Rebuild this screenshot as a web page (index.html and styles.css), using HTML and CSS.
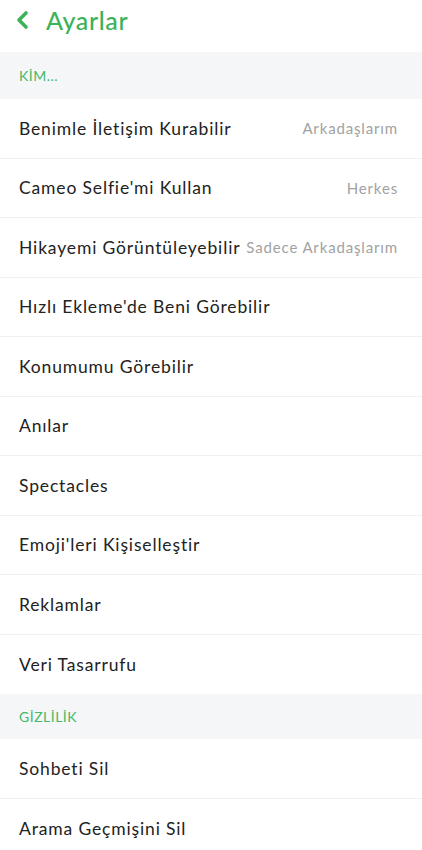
FILE: index.html
```html
<!DOCTYPE html>
<html lang="tr">
<head>
<meta charset="utf-8">
<link rel="stylesheet" href="styles.css">
</head>
<body>
<header class="topbar">
  <svg class="back" width="14" height="20" viewBox="0 0 14 20"><path d="M11 3 L4 10 L11 17" fill="none" stroke="#3cb25a" stroke-width="3.6" stroke-linecap="round" stroke-linejoin="round"/></svg>
  <h1 class="title">Ayarlar</h1>
</header>
<div class="section">KİM...</div>
<ul class="list">
  <li class="row"><span class="label">Benimle İletişim Kurabilir</span><span class="value">Arkadaşlarım</span></li>
  <li class="row"><span class="label">Cameo Selfie'mi Kullan</span><span class="value">Herkes</span></li>
  <li class="row"><span class="label">Hikayemi Görüntüleyebilir</span><span class="value">Sadece Arkadaşlarım</span></li>
  <li class="row"><span class="label">Hızlı Ekleme'de Beni Görebilir</span></li>
  <li class="row"><span class="label">Konumumu Görebilir</span></li>
  <li class="row"><span class="label">Anılar</span></li>
  <li class="row"><span class="label">Spectacles</span></li>
  <li class="row"><span class="label">Emoji'leri Kişiselleştir</span></li>
  <li class="row"><span class="label">Reklamlar</span></li>
  <li class="row last"><span class="label">Veri Tasarrufu</span></li>
</ul>
<div class="section small">GİZLİLİK</div>
<ul class="list">
  <li class="row"><span class="label">Sohbeti Sil</span></li>
  <li class="row last"><span class="label">Arama Geçmişini Sil</span></li>
</ul>
</body>
</html>
```
FILE: styles.css
```css
html, body {
  margin: 0;
  padding: 0;
  background: #ffffff;
  font-family: Lato, "Noto Sans", sans-serif;
}
.topbar {
  height: 52px;
  display: flex;
  align-items: flex-start;
  padding: 0 0 0 15px;
  box-sizing: border-box;
}
.back {
  margin-top: 10px;
}
.title {
  margin: 3px 0 0 17px;
  font-size: 25px;
  font-weight: 500;
  letter-spacing: 0.6px;
  color: #3cb25a;
  line-height: 34px;
}
.section {
  background: #f5f6f8;
  height: 47px;
  display: flex;
  align-items: center;
  padding-left: 19px;
  font-size: 14px;
  letter-spacing: 0.5px;
  color: #46b866;
}
.section.small {
  height: 45px;
}
.list {
  list-style: none;
  margin: 0;
  padding: 0;
}
.row {
  height: 59.5px;
  box-sizing: border-box;
  border-bottom: 1px solid #f0f0f0;
  display: flex;
  align-items: center;
  justify-content: space-between;
  padding: 0 24px 0 19px;
}
.row.last {
  border-bottom: none;
}
.label {
  font-size: 17.5px;
  letter-spacing: 0.85px;
  color: #222222;
  white-space: nowrap;
}
.value {
  font-size: 15px;
  letter-spacing: 0.85px;
  color: #a2a2a2;
  white-space: nowrap;
}
```
